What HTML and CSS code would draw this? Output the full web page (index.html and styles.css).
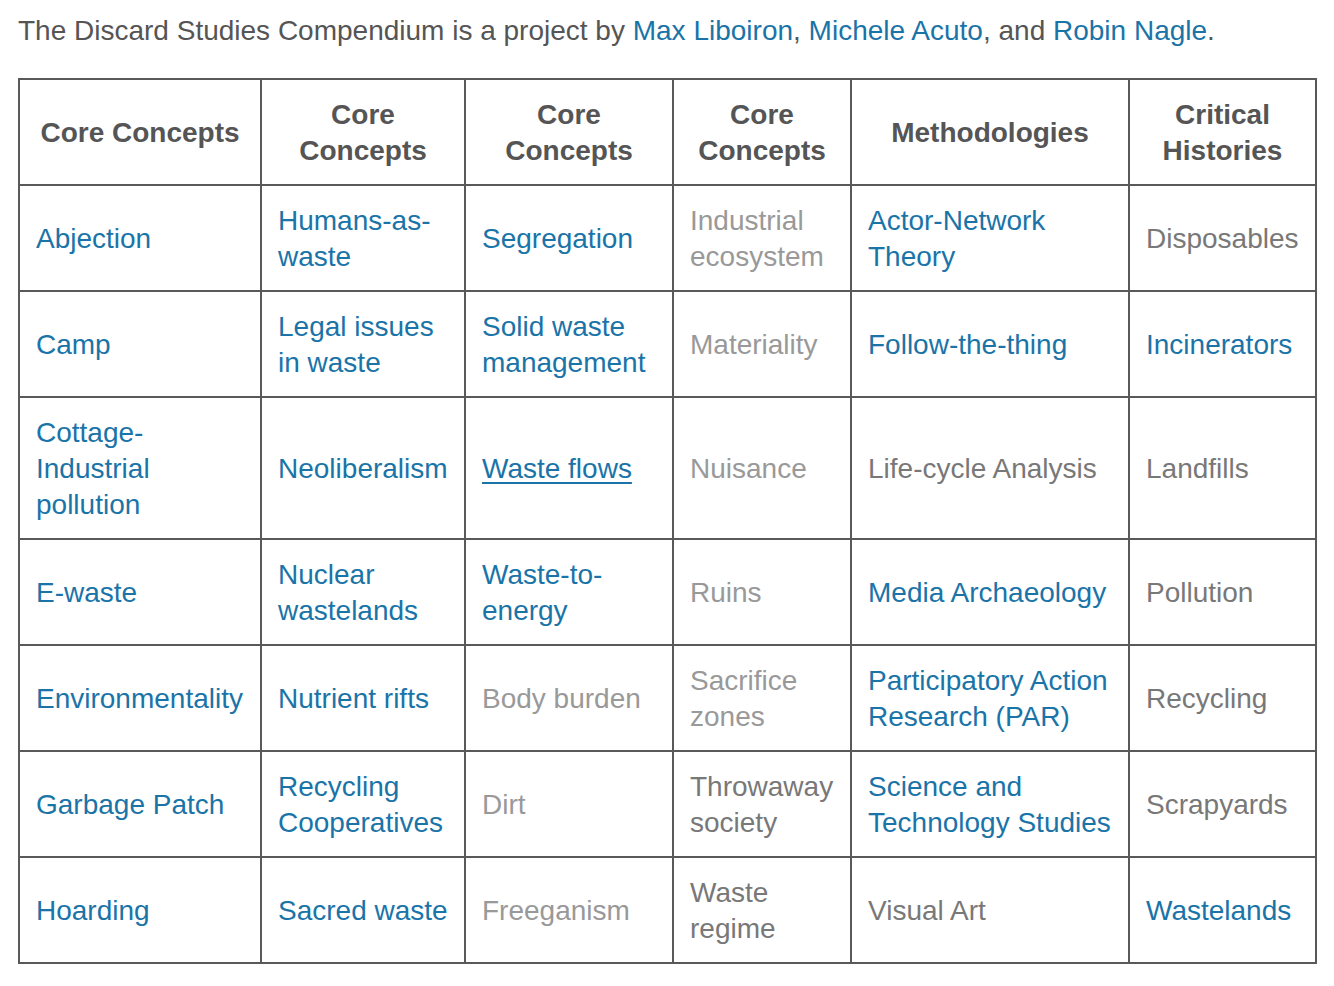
FILE: index.html
```html
<!DOCTYPE html>
<html lang="en">
<head>
<meta charset="utf-8">
<title>Discard Studies Compendium</title>
<link rel="stylesheet" href="styles.css">
</head>
<body>
<p class="intro">The Discard Studies Compendium is a project by <a href="#">Max Liboiron</a>, <a href="#">Michele Acuto</a>, and <a href="#">Robin Nagle</a>.</p>
<div class="grid" role="table">
  <div class="cell head">Core Concepts</div>
  <div class="cell head">Core<br>Concepts</div>
  <div class="cell head">Core<br>Concepts</div>
  <div class="cell head">Core<br>Concepts</div>
  <div class="cell head">Methodologies</div>
  <div class="cell head">Critical<br>Histories</div>

  <div class="cell"><a href="#">Abjection</a></div>
  <div class="cell"><a href="#">Humans-as-<br>waste</a></div>
  <div class="cell"><a href="#">Segregation</a></div>
  <div class="cell light">Industrial<br>ecosystem</div>
  <div class="cell"><a href="#">Actor-Network<br>Theory</a></div>
  <div class="cell dark">Disposables</div>

  <div class="cell"><a href="#">Camp</a></div>
  <div class="cell"><a href="#">Legal issues<br>in waste</a></div>
  <div class="cell"><a href="#">Solid waste<br>management</a></div>
  <div class="cell light">Materiality</div>
  <div class="cell"><a href="#">Follow-the-thing</a></div>
  <div class="cell"><a href="#">Incinerators</a></div>

  <div class="cell"><a href="#">Cottage-<br>Industrial<br>pollution</a></div>
  <div class="cell"><a href="#">Neoliberalism</a></div>
  <div class="cell"><a href="#" class="hover">Waste flows</a></div>
  <div class="cell light">Nuisance</div>
  <div class="cell dark">Life-cycle Analysis</div>
  <div class="cell dark">Landfills</div>

  <div class="cell"><a href="#">E-waste</a></div>
  <div class="cell"><a href="#">Nuclear<br>wastelands</a></div>
  <div class="cell"><a href="#">Waste-to-<br>energy</a></div>
  <div class="cell light">Ruins</div>
  <div class="cell"><a href="#">Media Archaeology</a></div>
  <div class="cell dark">Pollution</div>

  <div class="cell"><a href="#">Environmentality</a></div>
  <div class="cell"><a href="#">Nutrient rifts</a></div>
  <div class="cell light">Body burden</div>
  <div class="cell light">Sacrifice<br>zones</div>
  <div class="cell"><a href="#">Participatory Action<br>Research (PAR)</a></div>
  <div class="cell dark">Recycling</div>

  <div class="cell"><a href="#">Garbage Patch</a></div>
  <div class="cell"><a href="#">Recycling<br>Cooperatives</a></div>
  <div class="cell light">Dirt</div>
  <div class="cell dark">Throwaway<br>society</div>
  <div class="cell"><a href="#">Science and<br>Technology Studies</a></div>
  <div class="cell dark">Scrapyards</div>

  <div class="cell"><a href="#">Hoarding</a></div>
  <div class="cell"><a href="#">Sacred waste</a></div>
  <div class="cell light">Freeganism</div>
  <div class="cell dark">Waste<br>regime</div>
  <div class="cell dark">Visual Art</div>
  <div class="cell"><a href="#">Wastelands</a></div>
</div>
</body>
</html>
```

FILE: styles.css
```css
html, body {
  background: #ffffff;
}

body {
  margin: 0;
  padding: 13px 17px 20px 18px;
  font-family: "Liberation Sans", Arial, Helvetica, sans-serif;
  font-size: 28px;
  line-height: 36px;
  color: #555555;
}

a {
  color: #1a74a8;
  text-decoration: none;
}

a.hover {
  text-decoration: underline;
  text-decoration-thickness: 2px;
  text-underline-offset: 4px;
}

.intro {
  margin: 0 0 29px 0;
  white-space: nowrap;
}

.grid {
  display: grid;
  grid-template-columns: 242px 204px 208px 178px 278px 187px;
  width: 1299px;
  box-sizing: border-box;
  border-left: 2px solid #595959;
  border-top: 2px solid #595959;
}

.cell {
  box-sizing: border-box;
  border-right: 2px solid #595959;
  border-bottom: 2px solid #595959;
  padding: 17px 16px 15px 16px;
  display: flex;
  align-items: center;
  white-space: nowrap;
  min-width: 0;
}

.head {
  font-weight: bold;
  color: #555555;
  justify-content: center;
  text-align: center;
}

.light {
  color: #999999;
}

.dark {
  color: #787878;
}
```
